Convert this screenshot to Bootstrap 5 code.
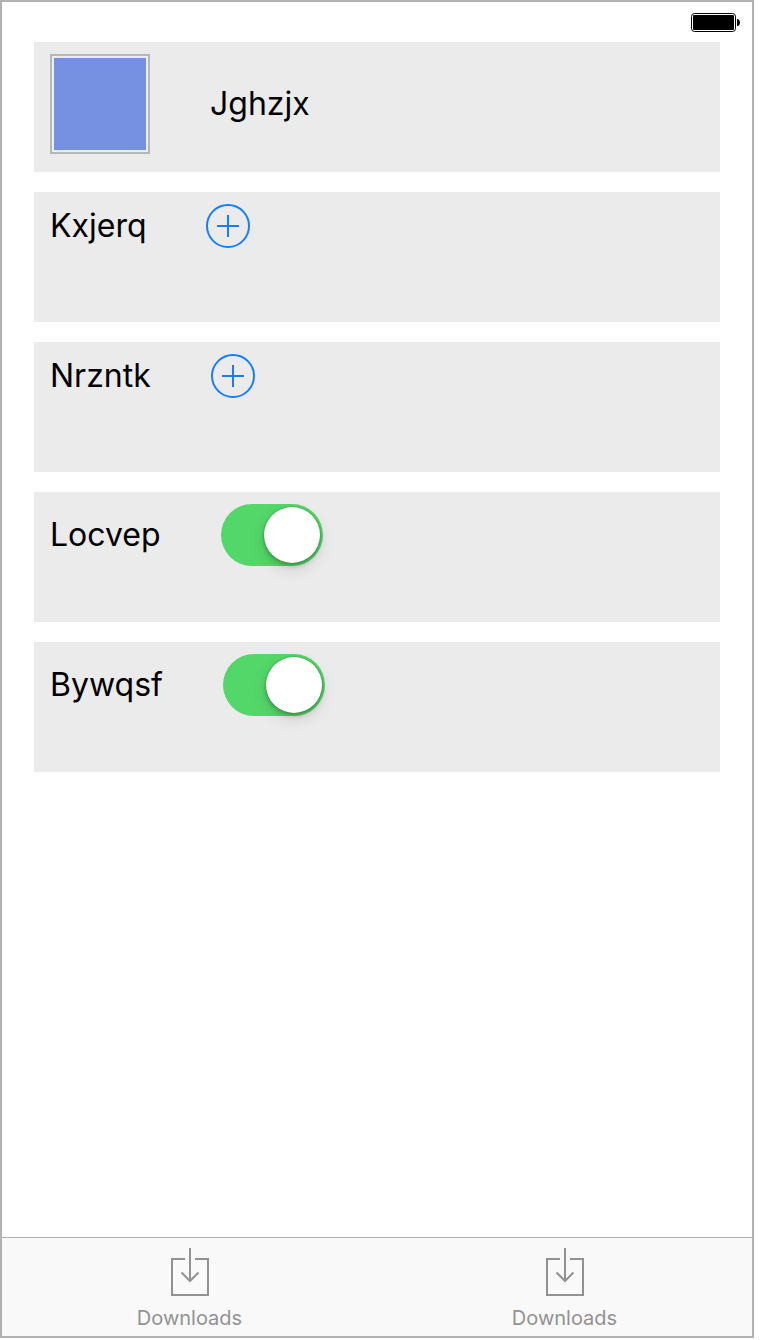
<!DOCTYPE html>
<html lang="en">
<head>
<meta charset="utf-8">
<meta name="viewport" content="width=device-width, initial-scale=1">
<title>Settings</title>
<link rel="stylesheet" href="https://cdn.jsdelivr.net/npm/bootstrap@5.3.0/dist/css/bootstrap.min.css">
<style>
  body { font-family: Inter, "Liberation Sans", sans-serif; color: #000; background: #fff; }
  .page-wrap { padding: 0 6px 2px 0; }
  .device { border: 2px solid #b2b2b2; }
  .status-bar { height: 40px; padding: 2px 12px 0; }
  .panels { gap: 20px; padding: 0 32px; }
  .panel { min-height: 130px; padding: 12px 16px; background: #ebebeb; }
  .panel-line { gap: 60px; font-size: 32px; line-height: 44px; }
  .swatch { width: 100px; height: 100px; padding: 2px; border: 2px solid #b8b8b8; background: #eaecf4; }
  .swatch-fill { background: #7690e2; }
  .add-btn { width: 44px; height: 44px; color: #157efb; }
  .panel-line .toggle { width: 102px; height: 62px; border: 0; border-radius: 31px; cursor: pointer; position: relative; }
  .panel-line .toggle, .panel-line .toggle:checked, .panel-line .toggle:focus { background-image: none; background-color: #c8c8c8; }
  .panel-line .toggle:checked { background-color: #53d769; }
  .toggle::before { content: ""; position: absolute; top: 3px; left: 3px; width: 56px; height: 56px; border-radius: 50%; background: #fff; box-shadow: 0 0 2px rgba(0,0,0,.3), 0 3px 5px rgba(0,0,0,.2), 0 6px 16px rgba(0,0,0,.12); }
  .toggle:checked::before { left: auto; right: 3px; }
  .tab-bar { border-top: 1px solid #b2b2b2; background: #f9f9f9; }
  .tab-bar .tab-item { height: 98px; padding: 8px 0 0; gap: 8px; color: #929292; font-size: 20px; line-height: 24px; }
</style>
</head>
<body>
<div class="page-wrap min-vh-100 d-flex">
  <div class="device flex-fill d-flex flex-column">
    <header class="status-bar d-flex justify-content-end align-items-center">
      <svg width="49" height="20" viewBox="0 0 49 20" role="img" aria-label="Battery full">
        <rect x=".5" y=".5" width="44" height="18" rx="3" fill="none" stroke="#000"/>
        <rect x="2" y="2" width="41" height="15" rx="1" fill="#000"/>
        <path d="M46 6h1q2 1 2 3.500t-2 3.500h-1z" fill="#000"/>
      </svg>
    </header>
    <main class="panels flex-grow-1 d-flex flex-column">
      <section class="panel">
        <div class="panel-line d-flex align-items-center">
          <div class="swatch d-flex"><div class="swatch-fill flex-fill"></div></div>
          <span>Jghzjx</span>
        </div>
      </section>
      <section class="panel">
        <div class="panel-line d-flex align-items-center">
          <span>Kxjerq</span>
          <button type="button" class="add-btn btn border-0 p-0 d-flex" aria-label="Add Kxjerq">
            <svg width="44" height="44" viewBox="0 0 44 44" fill="none" stroke="currentColor" stroke-width="2" aria-hidden="true"><circle cx="22" cy="22" r="21"/><path d="M11 22h22M22 11v22"/></svg>
          </button>
        </div>
      </section>
      <section class="panel">
        <div class="panel-line d-flex align-items-center">
          <span>Nrzntk</span>
          <button type="button" class="add-btn btn border-0 p-0 d-flex" aria-label="Add Nrzntk">
            <svg width="44" height="44" viewBox="0 0 44 44" fill="none" stroke="currentColor" stroke-width="2" aria-hidden="true"><circle cx="22" cy="22" r="21"/><path d="M11 22h22M22 11v22"/></svg>
          </button>
        </div>
      </section>
      <section class="panel">
        <div class="panel-line d-flex align-items-center">
          <label for="locvep">Locvep</label>
          <input class="form-check-input toggle m-0" type="checkbox" role="switch" id="locvep" checked>
        </div>
      </section>
      <section class="panel">
        <div class="panel-line d-flex align-items-center">
          <label for="bywqsf">Bywqsf</label>
          <input class="form-check-input toggle m-0" type="checkbox" role="switch" id="bywqsf" checked>
        </div>
      </section>
    </main>
    <nav class="tab-bar nav nav-fill row-cols-2" aria-label="Tabs">
      <a class="tab-item nav-link d-flex flex-column align-items-center" href="#downloads">
        <svg width="38" height="52" viewBox="0 0 38 52" fill="none" stroke="currentColor" stroke-width="2" aria-hidden="true"><path d="M14 13H1v36h36V13H24M19 2v33M10.500 26.500l8.500 8.500 8.500-8.500"/></svg>
        <span>Downloads</span>
      </a>
      <a class="tab-item nav-link d-flex flex-column align-items-center" href="#downloads-2">
        <svg width="38" height="52" viewBox="0 0 38 52" fill="none" stroke="currentColor" stroke-width="2" aria-hidden="true"><path d="M14 13H1v36h36V13H24M19 2v33M10.500 26.500l8.500 8.500 8.500-8.500"/></svg>
        <span>Downloads</span>
      </a>
    </nav>
  </div>
</div>
<script src="https://cdn.jsdelivr.net/npm/bootstrap@5.3.0/dist/js/bootstrap.bundle.min.js"></script>
</body>
</html>
